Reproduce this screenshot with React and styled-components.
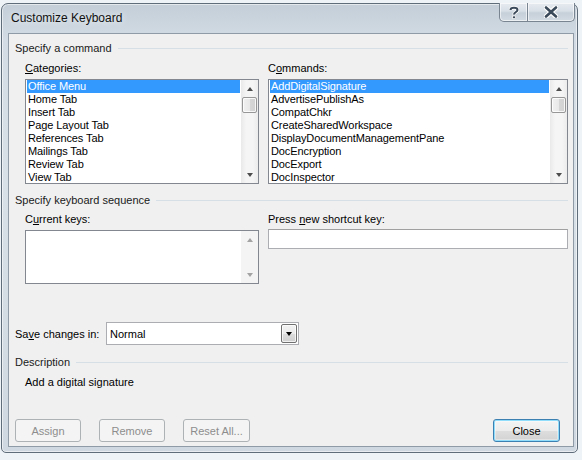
import React from "react";
import styled, { createGlobalStyle } from "styled-components";

const GlobalStyle = createGlobalStyle`
  html, body {
    margin: 0;
    padding: 0;
    background: #eef3f8;
    font-family: "Liberation Sans", Arial, sans-serif;
  }
`;

const categories = [
  "Office Menu",
  "Home Tab",
  "Insert Tab",
  "Page Layout Tab",
  "References Tab",
  "Mailings Tab",
  "Review Tab",
  "View Tab",
];

const commands = [
  "AddDigitalSignature",
  "AdvertisePublishAs",
  "CompatChkr",
  "CreateSharedWorkspace",
  "DisplayDocumentManagementPane",
  "DocEncryption",
  "DocExport",
  "DocInspector",
];

function App() {
  return (
    <>
      <GlobalStyle />
      <Window>
        <TitleBar>
          <Title>Customize Keyboard</Title>
          <CaptionButtons>
            <CaptionButton $w={29}>
              <svg width="10" height="13" viewBox="0 0 10 13">
                <path
                  d="M1.5 4 C1.5 1 8.5 1 8.5 4 C8.5 6 5 6 5 8.5"
                  fill="none"
                  stroke="#fff"
                  strokeWidth="3.6"
                />
                <path
                  d="M1.5 4 C1.5 1 8.5 1 8.5 4 C8.5 6 5 6 5 8.5"
                  fill="none"
                  stroke="#3b4a5a"
                  strokeWidth="2"
                />
                <rect x="3.6" y="10" width="2.8" height="2.6" fill="#3b4a5a" stroke="#fff" strokeWidth="0.7" />
              </svg>
            </CaptionButton>
            <CaptionButton $w={47} $last>
              <svg width="14" height="12" viewBox="0 0 14 12">
                <path d="M2 1.5 L12 10.5 M12 1.5 L2 10.5" stroke="#fff" strokeWidth="5" strokeLinecap="round" />
                <path d="M2 1.5 L12 10.5 M12 1.5 L2 10.5" stroke="#3b4a5a" strokeWidth="2.6" strokeLinecap="round" />
              </svg>
            </CaptionButton>
          </CaptionButtons>
        </TitleBar>

        <Client>
          <GroupHeader>Specify a command</GroupHeader>
          <TwoColumns>
            <Column>
              <FieldLabel>
                <u>C</u>ategories:
              </FieldLabel>
              <ListBox $h={105}>
                <ListItems>
                  {categories.map((c, i) => (
                    <ListItem key={c} $selected={i === 0}>
                      {c}
                    </ListItem>
                  ))}
                </ListItems>
                <ScrollBar>
                  <Arrow />
                  <Thumb />
                  <Track />
                  <Arrow $down />
                </ScrollBar>
              </ListBox>
            </Column>
            <Column $wide>
              <FieldLabel>
                C<u>o</u>mmands:
              </FieldLabel>
              <ListBox $h={105}>
                <ListItems>
                  {commands.map((c, i) => (
                    <ListItem key={c} $selected={i === 0}>
                      {c}
                    </ListItem>
                  ))}
                </ListItems>
                <ScrollBar>
                  <Arrow />
                  <Thumb />
                  <Track />
                  <Arrow $down />
                </ScrollBar>
              </ListBox>
            </Column>
          </TwoColumns>

          <GroupHeader $top={9}>Specify keyboard sequence</GroupHeader>
          <TwoColumns $top={5}>
            <Column>
              <FieldLabel>
                C<u>u</u>rrent keys:
              </FieldLabel>
              <ListBox $h={54}>
                <ListItems />
                <ScrollBar $plain>
                  <Arrow $disabled />
                  <Track />
                  <Arrow $down $disabled />
                </ScrollBar>
              </ListBox>
            </Column>
            <Column $wide>
              <FieldLabel>
                Press <u>n</u>ew shortcut key:
              </FieldLabel>
              <TextBox />
            </Column>
          </TwoColumns>

          <SaveRow>
            <SaveLabel>
              Sa<u>v</u>e changes in:
            </SaveLabel>
            <Combo>
              <ComboText>Normal</ComboText>
              <ComboButton>
                <ArrowGlyph $dark />
              </ComboButton>
            </Combo>
          </SaveRow>

          <GroupHeader $top={10}>Description</GroupHeader>
          <DescriptionText>Add a digital signature</DescriptionText>

          <ButtonRow>
            <Button disabled $w={66}>Assign</Button>
            <Button disabled $w={66}>Remove</Button>
            <Button disabled $w={67}>Reset All...</Button>
            <Spacer />
            <Button $default $w={67}>Close</Button>
          </ButtonRow>
        </Client>
      </Window>
    </>
  );
}

const Window = styled.div`
  box-sizing: border-box;
  width: 577px;
  margin: 3px 0 0 1px;
  padding: 0 3px 5px 6px;
  border: 1px solid #5f6d7a;
  border-radius: 7px 7px 5px 5px;
  background: linear-gradient(180deg, #c3ced8 0%, #d3dce4 8%, #d9e1e8 40%, #cfd8e0 100%);
  box-shadow: inset 0 0 0 1px rgba(255, 255, 255, 0.55);
`;

const TitleBar = styled.div`
  height: 29px;
  display: flex;
  justify-content: space-between;
  align-items: flex-start;
`;

const Title = styled.div`
  padding: 7px 0 0 3px;
  font-size: 12px;
  color: #111;
  text-shadow: 0 0 6px rgba(255, 255, 255, 0.9);
`;

const CaptionButtons = styled.div`
  display: flex;
  margin-top: -1px;
  margin-right: -1px;
`;

const CaptionButton = styled.div`
  width: ${(p) => p.$w}px;
  height: 19px;
  box-sizing: border-box;
  display: flex;
  align-items: center;
  justify-content: center;
  border: 1px solid #7a8592;
  border-top: none;
  border-left: ${(p) => (p.$last ? "none" : "1px solid #7a8592")};
  border-radius: ${(p) => (p.$last ? "0 0 5px 0" : "0 0 0 5px")};
  background: linear-gradient(180deg, #e6ebf0 0%, #d8dfe6 45%, #c6d0d9 55%, #d2dae2 100%);
  box-shadow: inset 0 0 0 1px rgba(255, 255, 255, 0.6);
`;

const Client = styled.div`
  box-sizing: border-box;
  height: 414px;
  border: 1px solid #8f9ca8;
  background: #f0f0f0;
  padding: 7px 5px 0 6px;
  display: flex;
  flex-direction: column;
  font-size: 11px;
  color: #000;
`;

const GroupHeader = styled.div`
  display: flex;
  align-items: center;
  gap: 6px;
  height: 14px;
  margin-top: ${(p) => p.$top || 0}px;
  white-space: nowrap;
  color: #1a1a1a;

  &::after {
    content: "";
    flex: 1;
    height: 1px;
    background: #d5dfe5;
  }
`;

const TwoColumns = styled.div`
  display: flex;
  gap: 9px;
  padding-left: 10px;
  margin-top: ${(p) => (p.$top === undefined ? 6 : p.$top)}px;
`;

const Column = styled.div`
  display: flex;
  flex-direction: column;
  width: ${(p) => (p.$wide ? 300 : 234)}px;
  flex: none;
`;

const FieldLabel = styled.div`
  height: 14px;
  line-height: 14px;
  margin-bottom: 4px;
  white-space: nowrap;
`;

const ListBox = styled.div`
  box-sizing: border-box;
  height: ${(p) => p.$h}px;
  border: 1px solid #828790;
  background: #fff;
  display: flex;
`;

const ListItems = styled.div`
  flex: 1;
  padding: 0 1px;
`;

const ListItem = styled.div`
  height: 13px;
  line-height: 13px;
  padding-left: 1px;
  white-space: nowrap;
  letter-spacing: -0.1px;
  background: ${(p) => (p.$selected ? "#3399ff" : "transparent")};
  color: ${(p) => (p.$selected ? "#fff" : "#000")};
`;

const ScrollBar = styled.div`
  width: 17px;
  flex: none;
  display: flex;
  flex-direction: column;
  align-items: center;
  background: ${(p) => (p.$plain ? "#f4f4f4" : "linear-gradient(90deg, #e9e9e9, #f5f5f5 30%, #f5f5f5 70%, #ececec)")};
`;

const ArrowGlyph = styled.span`
  width: 0;
  height: 0;
  border-left: 3.5px solid transparent;
  border-right: 3.5px solid transparent;
  ${(p) =>
    p.$up
      ? `border-bottom: 4px solid ${p.$c};`
      : `border-top: 4px solid ${p.$dark ? "#000" : p.$c};`}
`;

const ArrowBox = styled.div`
  height: 17px;
  width: 17px;
  flex: none;
  display: flex;
  align-items: center;
  justify-content: center;
`;

function Arrow({ $down, $disabled }) {
  const c = $disabled ? "#a3a3a3" : "#4d4d4d";
  return (
    <ArrowBox>
      <ArrowGlyph $up={!$down} $c={c} />
    </ArrowBox>
  );
}

const Thumb = styled.div`
  box-sizing: border-box;
  width: 15px;
  height: 16px;
  flex: none;
  border: 1px solid #979797;
  border-radius: 2px;
  background: linear-gradient(90deg, #f1f1f1 0%, #e9e9e9 50%, #d6d6d6 51%, #d2d2d2 100%);
  box-shadow: inset 0 0 0 1px rgba(255, 255, 255, 0.8);
`;

const Track = styled.div`
  flex: 1;
`;

const TextBox = styled.div`
  box-sizing: border-box;
  height: 20px;
  margin-top: -1px;
  border: 1px solid #abadb3;
  border-top-color: #a0a0a0;
  background: #fff;
`;

const SaveRow = styled.div`
  display: flex;
  align-items: center;
  margin-top: 38px;
  height: 23px;
`;

const SaveLabel = styled.div`
  width: 91px;
  flex: none;
  white-space: nowrap;
`;

const Combo = styled.div`
  box-sizing: border-box;
  width: 193px;
  height: 23px;
  border: 1px solid #abadb3;
  background: #fff;
  display: flex;
  align-items: center;
  padding: 1px;
`;

const ComboText = styled.div`
  flex: 1;
  padding-left: 2px;
`;

const ComboButton = styled.div`
  box-sizing: border-box;
  width: 16px;
  height: 19px;
  border: 1px solid #707070;
  border-radius: 2px;
  display: flex;
  align-items: center;
  justify-content: center;
  background: linear-gradient(180deg, #f2f2f2 0%, #ebebeb 50%, #dddddd 51%, #cfcfcf 100%);
  box-shadow: inset 0 0 0 1px rgba(255, 255, 255, 0.7);
`;

const DescriptionText = styled.div`
  margin-top: 6px;
  padding-left: 10px;
  height: 14px;
  line-height: 14px;
`;

const ButtonRow = styled.div`
  display: flex;
  gap: 18px;
  margin-top: auto;
  margin-bottom: 4px;
  padding-right: 8px;
`;

const Spacer = styled.div`
  flex: 1;
`;

const Button = styled.button`
  box-sizing: border-box;
  width: ${(p) => p.$w}px;
  height: 23px;
  padding: 0;
  font-family: inherit;
  font-size: 11px;
  border-radius: 3px;
  border: 1px solid ${(p) => (p.$default ? "#3c7fb1" : "#adb2b5")};
  color: ${(p) => (p.$default ? "#000" : "#8d8d8d")};
  background: ${(p) =>
    p.$default
      ? "linear-gradient(180deg, #f4f4f4 0%, #ececec 50%, #dedede 51%, #d2d2d2 100%)"
      : "#f4f4f4"};
  box-shadow: ${(p) =>
    p.$default ? "inset 0 0 0 1px #8fdcfb, inset 0 0 0 2px rgba(255,255,255,0.35)" : "none"};
`;

export default App;
